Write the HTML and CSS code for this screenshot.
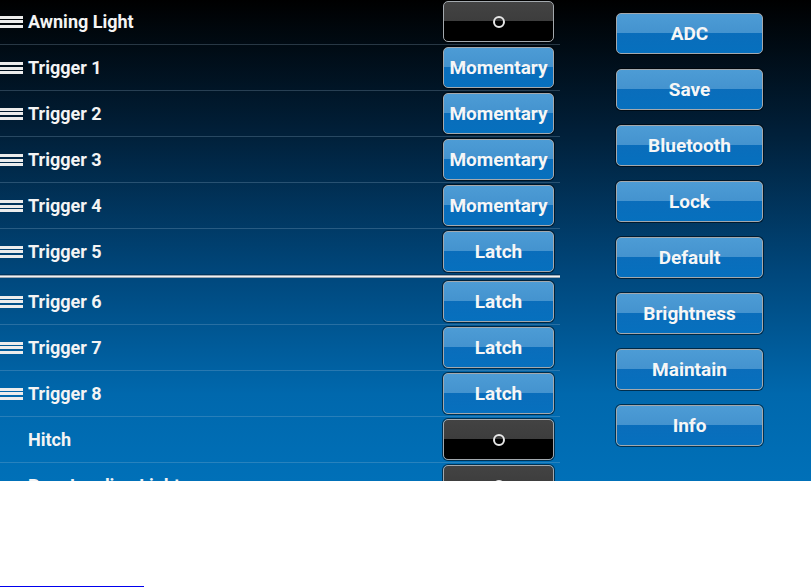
FILE: index.html
```html
<!DOCTYPE html>
<html lang="en">
<head>
  <meta charset="UTF-8">
  <title>Switch Setup</title>
  <link rel="stylesheet" href="styles.css">
</head>
<body>
  <div class="painel">
    <div class="lista">
      <div class="linha">
        <span class="arrastar"></span>
        <span class="nome">Awning Light</span>
        <button class="botao chave"><span class="anel"></span></button>
      </div>
      <div class="linha">
        <span class="arrastar"></span>
        <span class="nome">Trigger 1</span>
        <button class="botao">Momentary</button>
      </div>
      <div class="linha">
        <span class="arrastar"></span>
        <span class="nome">Trigger 2</span>
        <button class="botao">Momentary</button>
      </div>
      <div class="linha">
        <span class="arrastar"></span>
        <span class="nome">Trigger 3</span>
        <button class="botao">Momentary</button>
      </div>
      <div class="linha">
        <span class="arrastar"></span>
        <span class="nome">Trigger 4</span>
        <button class="botao">Momentary</button>
      </div>
      <div class="linha">
        <span class="arrastar"></span>
        <span class="nome">Trigger 5</span>
        <button class="botao">Latch</button>
      </div>
      <div class="divisor"></div>
      <div class="linha">
        <span class="arrastar"></span>
        <span class="nome">Trigger 6</span>
        <button class="botao">Latch</button>
      </div>
      <div class="linha">
        <span class="arrastar"></span>
        <span class="nome">Trigger 7</span>
        <button class="botao">Latch</button>
      </div>
      <div class="linha">
        <span class="arrastar"></span>
        <span class="nome">Trigger 8</span>
        <button class="botao">Latch</button>
      </div>
      <div class="linha">
        <span class="espaco"></span>
        <span class="nome">Hitch</span>
        <button class="botao chave"><span class="anel"></span></button>
      </div>
      <div class="linha">
        <span class="espaco"></span>
        <span class="nome">Rear Landing Light</span>
        <button class="botao chave"><span class="anel"></span></button>
      </div>
    </div>

    <div class="menu">
      <button class="botao largo">ADC</button>
      <button class="botao largo">Save</button>
      <button class="botao largo">Bluetooth</button>
      <button class="botao largo">Lock</button>
      <button class="botao largo">Default</button>
      <button class="botao largo">Brightness</button>
      <button class="botao largo">Maintain</button>
      <button class="botao largo">Info</button>
    </div>
  </div>

  <a class="rodape" href="#"></a>
</body>
</html>
```

FILE: styles.css
```css
body {
  margin: 0;
  font-family: 'Roboto', 'Liberation Sans', sans-serif;
  background: white;
}

.painel {
  display: flex;
  height: 481px;
  overflow: hidden;
  background: linear-gradient(to bottom, #000 0%, #01203a 28%, #00467a 56%, #0068ad 82%, #0070b8 100%);
}

.lista {
  width: 560px;
  margin-top: -1px;
}

.linha {
  display: flex;
  align-items: center;
  height: 45px;
  border-bottom: 1px solid rgba(160, 190, 215, 0.25);
}

.linha:nth-child(6) {
  border-bottom-color: rgba(0, 20, 40, 0.35);
}

.divisor {
  height: 1px;
  margin-bottom: 1px;
  background: #f2f2f2;
  border-top: 1px solid #9aa7b3;
  border-bottom: 1px solid #9aa7b3;
}

.arrastar {
  width: 23px;
  height: 12px;
  margin-right: 5px;
  background: linear-gradient(to bottom,
    #ececec 0, #ececec 3px, transparent 3px, transparent 4.5px,
    #ececec 4.5px, #ececec 7.5px, transparent 7.5px, transparent 9px,
    #ececec 9px, #ececec 12px);
}

.espaco {
  width: 28px;
}

.nome {
  flex: 1;
  color: #f4f4f4;
  font-size: 18px;
  font-weight: 700;
  white-space: nowrap;
}

.botao {
  width: 111px;
  height: 41px;
  margin-right: 6px;
  padding: 0;
  border: 1px solid #a3a9ae;
  border-radius: 5px;
  box-shadow: 0 0 0 1px rgba(0, 0, 0, 0.55);
  background: linear-gradient(to bottom, #4d9cd5 0%, #4493cf 48%, #0a6dbb 48%, #0670be 100%);
  color: #f6f6f6;
  font-family: 'Roboto', 'Liberation Sans', sans-serif;
  font-size: 19px;
  font-weight: 700;
  display: flex;
  justify-content: center;
  align-items: center;
}

.chave {
  background: linear-gradient(to bottom, #434343 0%, #3d3d3d 48%, #000 48%, #000 100%);
}

.anel {
  width: 8px;
  height: 8px;
  border: 2px solid #e6e6e6;
  border-radius: 50%;
}

.menu {
  display: flex;
  flex-direction: column;
  gap: 15px;
  padding: 13px 0 0 56px;
}

.largo {
  width: 147px;
  margin-right: 0;
}

.rodape {
  display: block;
  width: 144px;
  height: 0;
  margin-top: 105px;
  border-bottom: 1px solid #0000ee;
}
```
